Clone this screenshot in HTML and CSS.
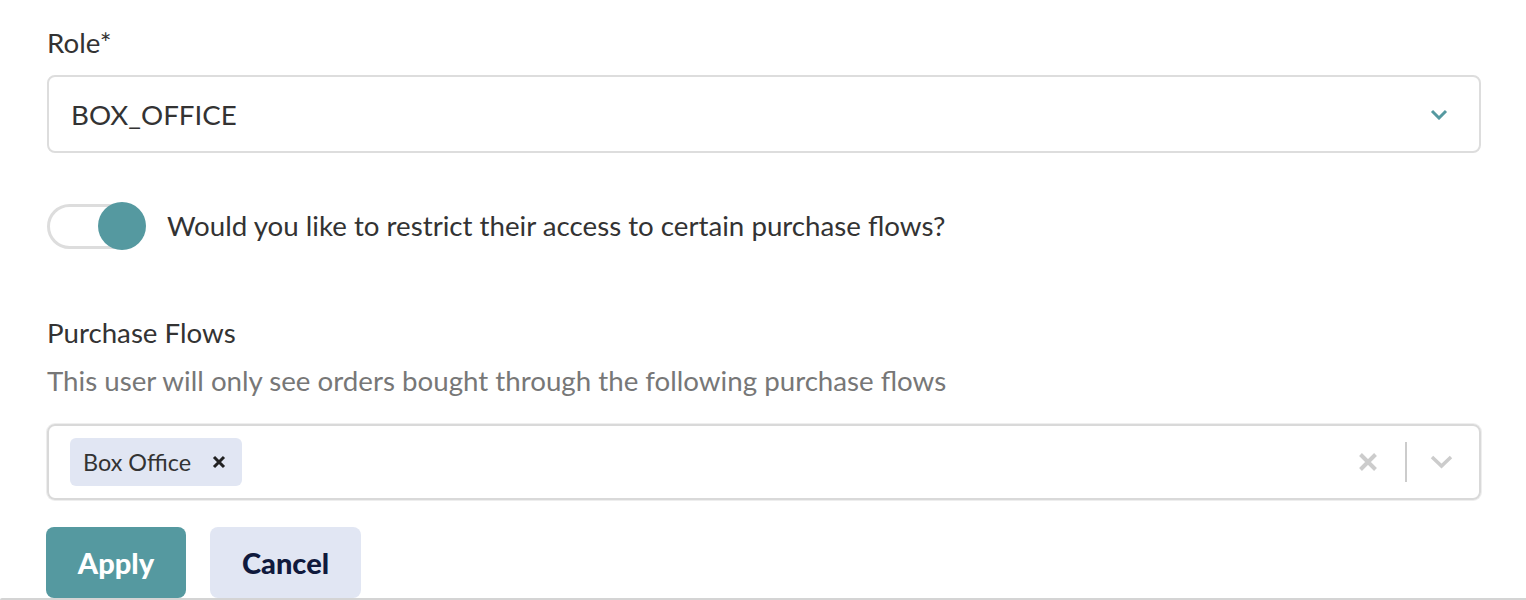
FILE: index.html
```html
<!DOCTYPE html>
<html>
<head>
<meta charset="utf-8">
<link rel="stylesheet" href="styles.css">
</head>
<body>
<div class="page">
  <div class="field">
    <div class="label">Role*</div>
    <div class="select">
      <span class="select-value">BOX_OFFICE</span>
      <svg class="chev" width="18" height="12" viewBox="0 0 18 12"><path d="M2 3 L9 10 L16 3" fill="none" stroke="#5599a0" stroke-width="3"/></svg>
    </div>
  </div>

  <div class="toggle-row">
    <div class="toggle"><div class="knob"></div></div>
    <span class="toggle-text">Would you like to restrict their access to certain purchase flows?</span>
  </div>

  <div class="field flows">
    <div class="label">Purchase Flows</div>
    <div class="help">This user will only see orders bought through the following purchase flows</div>
    <div class="multi">
      <div class="chips">
        <span class="chip">Box Office <svg class="chip-x" width="14" height="14" viewBox="0 0 14 14"><path d="M2 2 L12 12 M12 2 L2 12" stroke="#222" stroke-width="3"/></svg></span>
      </div>
      <div class="indicators">
        <svg width="20" height="20" viewBox="0 0 20 20"><path d="M2.5 2.5 L17.5 17.5 M17.5 2.5 L2.5 17.5" stroke="#cccccc" stroke-width="4"/></svg>
        <span class="sep"></span>
        <svg width="23" height="14" viewBox="0 0 23 14"><path d="M2 2 L11.5 11 L21 2" fill="none" stroke="#cccccc" stroke-width="3.5"/></svg>
      </div>
    </div>
  </div>

  <div class="actions">
    <button class="btn apply">Apply</button>
    <button class="btn cancel">Cancel</button>
  </div>
</div>
<div class="edge"></div>
</body>
</html>
```
FILE: styles.css
```css
html, body {
  margin: 0;
  padding: 0;
  background: #fff;
}
body {
  font-family: Lato, "Open Sans", sans-serif;
  color: #333;
  width: 1526px;
  height: 600px;
  position: relative;
  overflow: hidden;
}
.page {
  padding: 26px 45px 0 47px;
}
.label {
  font-size: 27.7px;
  line-height: 34px;
  color: #333;
}
.select {
  margin-top: 15px;
  height: 74px;
  border: 2px solid #dddddd;
  border-radius: 8px;
  display: flex;
  align-items: center;
  justify-content: space-between;
  padding: 0 31px 0 22px;
}
.select-value {
  font-size: 27.7px;
  color: #333;
}
.toggle-row {
  margin-top: 49px;
  display: flex;
  align-items: center;
  height: 48px;
}
.toggle {
  width: 98px;
  height: 45px;
  box-sizing: border-box;
  border: 3px solid #dddddd;
  border-radius: 23px;
  position: relative;
  margin-right: 22px;
  flex: none;
}
.knob {
  position: absolute;
  width: 48px;
  height: 48px;
  border-radius: 50%;
  background: #5599a0;
  right: -4px;
  top: -4.5px;
}
.toggle-text {
  font-size: 27.7px;
  line-height: 34px;
}
.flows {
  margin-top: 66px;
}
.help {
  margin-top: 16px;
  font-size: 27.7px;
  line-height: 30px;
  color: #777;
}
.multi {
  margin-top: 28px;
  height: 72px;
  border: 2px solid #d9d9d9;
  box-shadow: 0 0 0 1px #eeeeee;
  border-radius: 8px;
  display: flex;
  align-items: center;
  justify-content: space-between;
  padding: 0 26px 0 21px;
}
.chip {
  display: inline-flex;
  align-items: center;
  height: 48px;
  background: #e1e6f3;
  border-radius: 6px;
  padding: 0 16px 0 13px;
  font-size: 23.4px;
  line-height: 30px;
  color: #333;
}
.chip-x {
  margin-left: 21px;
}
.indicators {
  display: flex;
  align-items: center;
}
.sep {
  width: 2px;
  height: 40px;
  background: #cccccc;
  margin: 0 23px 0 27px;
}
.actions {
  margin-top: 27px;
  display: flex;
  gap: 24px;
}
.btn {
  font-family: Lato, sans-serif;
  font-weight: 900;
  font-size: 29px;
  height: 71px;
  border: none;
  border-radius: 8px;
  padding: 0;
}
.apply {
  width: 140px;
  background: #5599a0;
  color: #fff;
  margin-left: -1px;
}
.cancel {
  width: 151px;
  background: #e1e6f3;
  color: #101a3d;
}
.edge {
  position: absolute;
  left: 0;
  right: 0;
  bottom: 0;
  height: 2px;
  background: #d4d4d4;
  border-top-left-radius: 3px;
}
```
